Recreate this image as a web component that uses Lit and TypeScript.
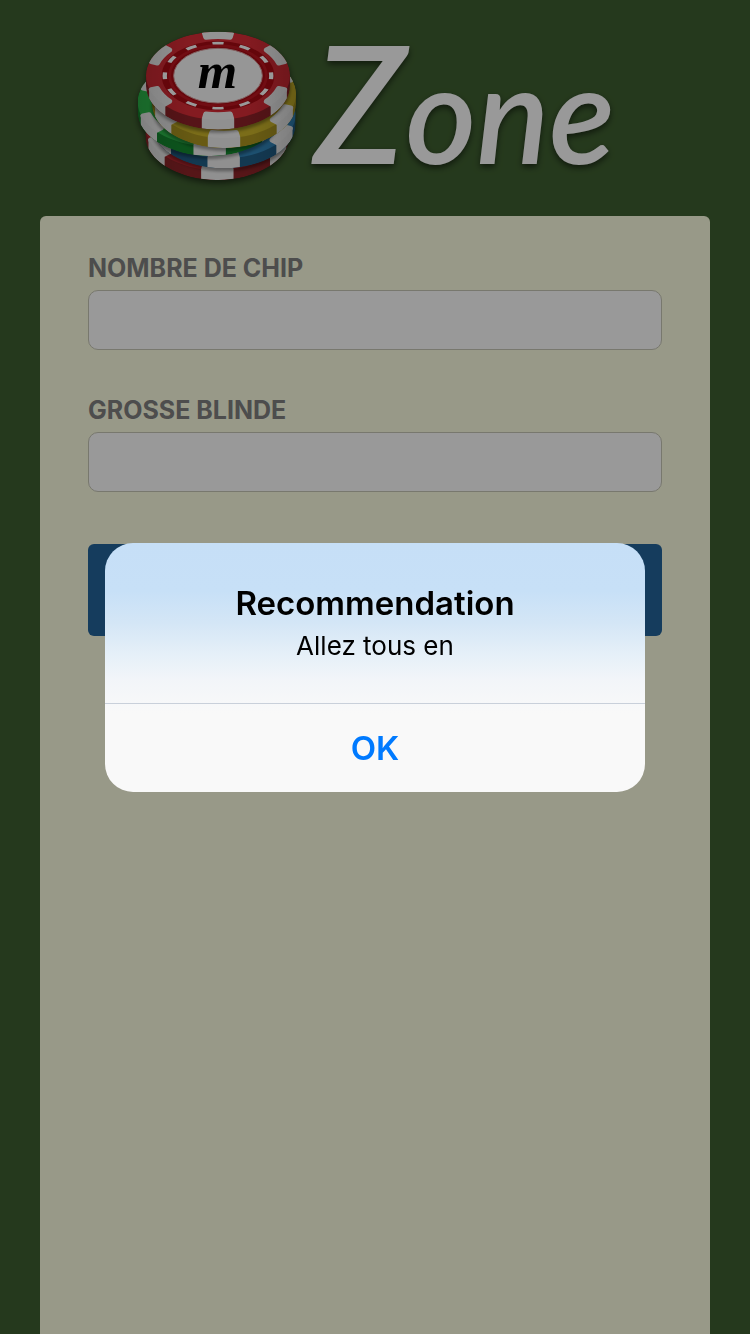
import { LitElement, html, svg, css } from "lit";
import { customElement, property } from "lit/decorators.js";

interface Chip {
  cx: number;
  cy: number;
  face: string;
  side: string;
}

const RX = 216;
const RY = 132;
const DEPTH = 30;
const SPOTS = [30, 90, 150, 210, 270, 330];

// Stack from bottom to top.
const CHIPS: Chip[] = [
  { cx: 262, cy: 318, face: "#c42a33", side: "#8f2529" },
  { cx: 281, cy: 283, face: "#3287bc", side: "#215f88" },
  { cx: 239, cy: 246, face: "#2fc14e", side: "#158a30" },
  { cx: 282, cy: 222, face: "#cdb62a", side: "#ad9720" },
  { cx: 264, cy: 167, face: "#dc2d37", side: "#8f2228" },
];

const at = (c: Chip, deg: number, k: number, dy = 0): string => {
  const a = (deg * Math.PI) / 180;
  return `${(c.cx + RX * k * Math.cos(a)).toFixed(1)} ${(c.cy + dy + RY * k * Math.sin(a)).toFixed(1)}`;
};

const ring = (c: Chip, a: number, b: number, inner: number, outer: number): string =>
  `M${at(c, a, inner)}L${at(c, a, outer)}A${RX * outer} ${RY * outer} 0 0 1 ${at(c, b, outer)}L${at(c, b, inner)}A${RX * inner} ${RY * inner} 0 0 0 ${at(c, a, inner)}Z`;

const wall = (c: Chip, a: number, b: number): string =>
  `M${at(c, a, 1)}A${RX} ${RY} 0 0 1 ${at(c, b, 1)}L${at(c, b, 1, DEPTH)}A${RX} ${RY} 0 0 0 ${at(c, a, 1, DEPTH)}Z`;

const body = (c: Chip): string =>
  `M${c.cx - RX} ${c.cy}A${RX} ${RY} 0 0 1 ${c.cx + RX} ${c.cy}V${c.cy + DEPTH}A${RX} ${RY} 0 0 1 ${c.cx - RX} ${c.cy + DEPTH}Z`;

@customElement("zone-logo")
export class ZoneLogo extends LitElement {
  static styles = css`
    :host {
      display: block;
    }
    .logo {
      display: block;
      width: 100%;
      height: auto;
      overflow: visible;
    }
    .stack,
    .word {
      filter: drop-shadow(0 3px 3px rgba(0, 0, 0, 0.55));
    }
    .word {
      font: italic 600 136px Lato, "Liberation Sans", sans-serif;
      fill: #fff;
    }
    .initial {
      font-size: 164px;
    }
    .letter {
      font: italic 700 152px "Liberation Serif", serif;
      fill: #000;
    }
  `;

  private chip(c: Chip, i: number) {
    return svg`
      <clipPath id="chip${i}"><path d=${body(c)} /></clipPath>
      <g clip-path="url(#chip${i})">
        <path d=${body(c)} fill=${c.side} />
        <ellipse cx=${c.cx} cy=${c.cy} rx=${RX} ry=${RY} fill=${c.face} />
        ${SPOTS.map(
          (s) => svg`<path d=${ring(c, s - 11, s + 11, 0.89, 0.98)} fill="#f6f6f6" stroke="#f6f6f6" stroke-width="15" stroke-linejoin="round" />`,
        )}
        ${[30, 90, 150].map((s) => svg`<path d=${wall(c, s - 13, s + 13)} fill="#f1f1f1" />`)}
        <path d=${body(c)} fill="url(#shade)" />
      </g>
      ${i < CHIPS.length - 1
        ? svg`<g clip-path="url(#chip${i})"><ellipse cx=${CHIPS[i + 1].cx} cy=${CHIPS[i + 1].cy + DEPTH + 7} rx=${RX + 2} ry=${RY + 2} fill="#000" opacity="0.35" filter="url(#soft)" /></g>`
        : null}`;
  }

  render() {
    const top = CHIPS[CHIPS.length - 1];
    return html`
      <svg class="logo" viewBox="0 0 490 170" role="img" aria-label="m Zone">
        <defs>
          <linearGradient id="shade" x1="0" x2="1" y1="0" y2="0">
            <stop offset="0" stop-color="#000" stop-opacity="0.12" />
            <stop offset="0.3" stop-color="#000" stop-opacity="0" />
            <stop offset="0.7" stop-color="#000" stop-opacity="0" />
            <stop offset="1" stop-color="#000" stop-opacity="0.15" />
          </linearGradient>
          <filter id="soft"><feGaussianBlur stdDeviation="5" /></filter>
        </defs>
        <g class="stack">
          <g transform="scale(0.33333)">
            ${CHIPS.map((c, i) => this.chip(c, i))}
            <ellipse cx="264" cy="167" rx="169" ry="104" fill="#a80a13" />
            <ellipse cx="264" cy="167" rx="145" ry="90" fill="none" stroke="#bd1620" stroke-width="8" />
            ${Array.from({ length: 12 }, (_, i) => i * 30).map(
              (a) => svg`<path d=${ring(top, a - 6, a + 6, 0.71, 0.77)} fill="#fff" />`,
            )}
            <ellipse cx="264" cy="167" rx="133" ry="82" fill="#fafafa" stroke="#d9a0a0" stroke-width="3" />
            <text class="letter" x="262" y="204" text-anchor="middle">m</text>
          </g>
        </g>
        <text class="word" x="184" y="144"><tspan class="initial">Z</tspan>one</text>
      </svg>
    `;
  }
}

@customElement("alert-box")
export class AlertBox extends LitElement {
  @property() heading = "";
  @property() message = "";

  static styles = css`
    :host {
      position: fixed;
      inset: 0;
      display: flex;
      align-items: center;
      justify-content: center;
      background: rgba(0, 0, 0, 0.4);
    }
    .box {
      box-sizing: border-box;
      width: 72%;
      max-width: 540px;
      border-radius: 28px;
      overflow: hidden;
      color: #000;
      text-align: center;
      background: linear-gradient(#c6dff7 0, #c7e0f7 48px, #d4e6f6 80px, #e6f0f8 112px, #f2f5f9 136px, #f9f9f9 170px);
    }
    .copy {
      padding: 39px 32px 40px;
    }
    .heading {
      margin: 0;
      font-size: 33px;
      line-height: 42px;
      font-weight: 600;
    }
    .message {
      margin: 5px 0 0;
      font-size: 26px;
      line-height: 34px;
    }
    .ok {
      display: block;
      width: 100%;
      height: 89px;
      padding: 0;
      border: 0;
      border-top: 1px solid #c9d0da;
      background: none;
      color: #007aff;
      font: inherit;
      font-size: 33px;
      font-weight: 600;
    }
  `;

  render() {
    return html`
      <section class="box" role="alertdialog" aria-modal="true" aria-labelledby="heading" aria-describedby="message">
        <div class="copy">
          <h2 class="heading" id="heading">${this.heading}</h2>
          <p class="message" id="message">${this.message}</p>
        </div>
        <button class="ok" type="button">OK</button>
      </section>
    `;
  }
}

@customElement("app-root")
export class AppRoot extends LitElement {
  static styles = css`
    :host {
      display: flex;
      flex-direction: column;
      min-height: 100vh;
      background: #3f6031;
      font-family: Inter, "Liberation Sans", sans-serif;
    }
    .header {
      padding: 20px 40px 26px;
    }
    .brand {
      max-width: 490px;
      margin: 0 auto;
    }
    .form {
      flex: 1;
      display: flex;
      flex-direction: column;
      margin: 0 40px;
      padding: 36px 48px;
      border-radius: 6px 6px 0 0;
      background: #feffe3;
    }
    .field {
      display: flex;
      flex-direction: column;
      gap: 6px;
      margin-bottom: 44px;
    }
    .label {
      color: #808080;
      font-size: 25px;
      line-height: 32px;
      font-weight: 700;
      text-transform: uppercase;
    }
    .input {
      box-sizing: border-box;
      width: 100%;
      height: 60px;
      padding: 0 16px;
      border: 1px solid #c8c8b8;
      border-radius: 10px;
      background: #fff;
      font: inherit;
      font-size: 28px;
    }
    .submit {
      height: 92px;
      margin-top: 8px;
      border: 0;
      border-radius: 6px;
      background: #23649b;
    }
  `;

  render() {
    return html`
      <header class="header"><zone-logo class="brand"></zone-logo></header>
      <form class="form">
        <div class="field">
          <label class="label" for="chips">Nombre de chip</label>
          <input class="input" id="chips" inputmode="numeric" />
        </div>
        <div class="field">
          <label class="label" for="blind">Grosse blinde</label>
          <input class="input" id="blind" inputmode="numeric" />
        </div>
        <button class="submit" type="button" aria-label="Calculer"></button>
      </form>
      <alert-box heading="Recommendation" message="Allez tous en"></alert-box>
    `;
  }
}
